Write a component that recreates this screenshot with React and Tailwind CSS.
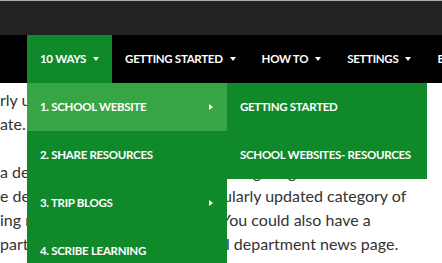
import React from "react";

const green = "bg-[#10892b]";

function Caret() {
  return (
    <span className="inline-block h-0 w-0 border-x-[3.5px] border-t-[4px] border-x-transparent border-t-white" />
  );
}

function RightArrow() {
  return (
    <span className="inline-block h-0 w-0 border-y-[3.5px] border-l-[4px] border-y-transparent border-l-white" />
  );
}

function NavItem({ label, active, children }) {
  return (
    <div className="relative">
      <a
        className={`flex h-12 items-center gap-[7px] px-[13px] text-[11.5px] font-bold tracking-[-0.3px] text-white ${
          active ? green : ""
        }`}
      >
        {label}
        <Caret />
      </a>
      {children}
    </div>
  );
}

function MenuItem({ label, hot, arrow }) {
  return (
    <div
      className={`flex h-12 items-center justify-between pl-[13px] pr-[14px] text-[11.5px] font-bold tracking-[-0.3px] text-white ${
        hot ? "bg-[#38a544]" : ""
      }`}
    >
      <span>{label}</span>
      {arrow && <RightArrow />}
    </div>
  );
}

const lines = [
  ["rly updated", "", "ml-0"],
  ["ate.", "", "ml-0"],
  ["", "", "ml-0"],
  ["a department", "navigating the site", "ml-0"],
  ["e department could have a reg", "ularly updated category of", "-ml-[1px]"],
  ["ing resources for parents.", "You could also have a", "-ml-[3px]"],
  ["partment news or a genera", "l department news page.", "ml-[2px]"],
];

export default function App() {
  return (
    <div className="relative h-[263px] w-[442px] overflow-hidden bg-white font-['Lato',sans-serif]">
      <div className="h-[1px] bg-[#b0b0b0]" />
      <div className="h-[34px] bg-[#222222]" />

      <nav className="relative z-10 flex h-12 whitespace-nowrap bg-black pl-[27px]">
        <NavItem label="10 WAYS" active>
          <div className={`absolute left-0 top-12 w-[200px] ${green}`}>
            <div className="relative">
              <MenuItem label="1. SCHOOL WEBSITE" hot arrow />
              <div className={`absolute left-full top-0 w-[200px] ${green}`}>
                <MenuItem label="GETTING STARTED" />
                <MenuItem label="SCHOOL WEBSITES- RESOURCES" />
              </div>
            </div>
            <MenuItem label="2. SHARE RESOURCES" />
            <MenuItem label="3. TRIP BLOGS" arrow />
            <MenuItem label="4. SCRIBE LEARNING" />
          </div>
        </NavItem>
        <NavItem label="GETTING STARTED" />
        <NavItem label="HOW TO" />
        <NavItem label="SETTINGS" />
        <NavItem label="BLOGS" />
      </nav>

      <main className="pt-[5px] text-[16px] leading-6 text-[#333333]">
        {lines.map(([left, right, shift], i) => (
          <div key={i} className="flex h-6 whitespace-nowrap">
            <span className="w-[224px] shrink-0 overflow-hidden">{left}</span>
            <span className={shift}>{right}</span>
          </div>
        ))}
      </main>
    </div>
  );
}
